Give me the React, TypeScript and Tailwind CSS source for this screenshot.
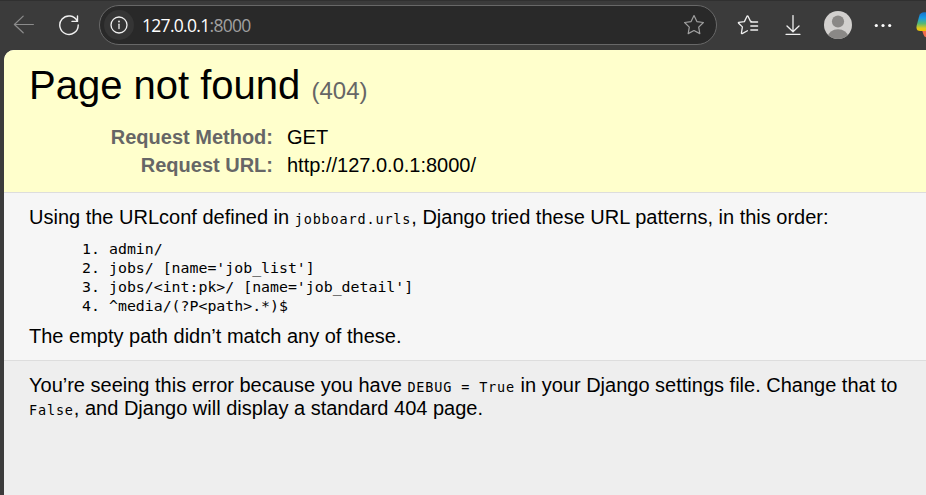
import type { ReactNode } from "react";

const patterns = [
  "admin/",
  "jobs/ [name='job_list']",
  "jobs/<int:pk>/ [name='job_detail']",
  "^media/(?P<path>.*)$",
];

function Code({ children }: { children: ReactNode }) {
  return (
    <code className="whitespace-pre font-['DejaVu_Sans_Mono',monospace] text-[13.5px] leading-none tracking-[0.84px]">
      {children}
    </code>
  );
}

function Toolbar() {
  return (
    <header className="flex h-[50px] shrink-0 items-center border-t border-[#303030] bg-[#3b3b3b] pb-px text-[#f0f0f0]">
      <svg className="ml-[13px] size-[22px] shrink-0 text-[#8b8b8b]" viewBox="0 0 22 22" fill="none" stroke="currentColor" strokeWidth="1.2" strokeLinecap="round" strokeLinejoin="round">
        <path d="M20.4 10.5H1.4M10.2 2.1 1.4 10.5l8.8 8.3" />
      </svg>
      <svg className="ml-[23px] size-[22px] shrink-0" viewBox="0 0 22 22" fill="none" stroke="currentColor" strokeWidth="1.4" strokeLinecap="round" strokeLinejoin="round">
        <path d="M19.2 7A9.2 9.2 0 1 0 20.2 11M19.5 1.9V7.4H14" />
      </svg>
      <div className="ml-[19px] flex h-10 w-[618px] shrink-0 items-center rounded-full border border-[#686868] bg-[#292929]">
        <div className="ml-[4px] flex size-[30px] items-center justify-center rounded-full bg-[#353535]">
          <svg className="size-[18px]" viewBox="0 0 18 18" fill="none" stroke="currentColor" strokeWidth="1.3" strokeLinecap="round">
            <circle cx="9" cy="9" r="8" />
            <path d="M9 8.2V12.6" />
            <circle cx="9" cy="5.5" r=".9" fill="currentColor" stroke="none" />
          </svg>
        </div>
        <span className="ml-[8px] whitespace-nowrap pb-px font-['Open_Sans',sans-serif] text-[17.5px] leading-6 tracking-[-0.7px] text-white">
          127.0.0.1<span className="text-[#a0a0a0]">:8000</span>
        </span>
        <svg className="ml-auto mr-[11px] size-[22px] text-[#a0a0a0]" viewBox="0 0 22 22" fill="none" stroke="currentColor" strokeWidth="1.2" strokeLinejoin="round">
          <path d="m11 1.6 2.9 6 6.5.9-4.7 4.6 1.1 6.5-5.8-3.1-5.8 3.1 1.1-6.5L1.6 8.5l6.5-.9z" />
        </svg>
      </div>
      <svg className="ml-[20px] size-[22px] shrink-0" viewBox="0 0 22 22" fill="none" stroke="currentColor" strokeWidth="1.3" strokeLinecap="round" strokeLinejoin="round">
        <path d="M14.6 7.6 13.4 7.1 11 2.2Q10.5 1.4 10 2.2L7.4 7.6 1.8 8.3Q1 8.6 1.6 9.2l3.8 3.7-1 6.1q0 .9.8.6l5.2-2.8M13.8 8h6.8M13.8 12h6.8M13.8 16h6.8" />
      </svg>
      <svg className="ml-[24px] size-[20px] shrink-0" viewBox="0 0 20 20" fill="none" stroke="currentColor" strokeWidth="1.3" strokeLinecap="round" strokeLinejoin="round">
        <path d="M10 .6v15.8M4 11l6 5.7 6-5.7M3 19.3h14" />
      </svg>
      <svg className="ml-[21px] size-[28px] shrink-0" viewBox="0 0 28 28">
        <defs><clipPath id="avatar"><circle cx="14" cy="14" r="14" /></clipPath></defs>
        <g clipPath="url(#avatar)">
          <rect width="28" height="28" fill="#d2d0ce" />
          <circle cx="14" cy="10.5" r="6.1" fill="#8a8886" />
          <ellipse cx="14" cy="25.5" rx="10" ry="7.2" fill="#8a8886" />
        </g>
      </svg>
      <svg className="ml-[22px] h-[6px] w-[18px] shrink-0" viewBox="0 0 18 6" fill="white">
        <circle cx="2.3" cy="3.5" r="1.6" /><circle cx="9" cy="3.5" r="1.6" /><circle cx="15.7" cy="3.5" r="1.6" />
      </svg>
      <svg className="ml-auto h-[26px] w-[10px] shrink-0" viewBox="0 0 10 26">
        <defs>
          <linearGradient id="copilot" x1="0" y1="0" x2="0" y2="1">
            <stop offset="0" stopColor="#1673c8" />
            <stop offset=".3" stopColor="#159be8" />
            <stop offset=".6" stopColor="#57b873" />
            <stop offset=".85" stopColor="#dfc91c" />
            <stop offset="1" stopColor="#f2c500" />
          </linearGradient>
        </defs>
        <path d="M10 .3H8Q4.4.3 3.3 3.8L.7 13.4Q-.5 19 4.3 19H10z" fill="url(#copilot)" />
        <path d="M6.3 19H10v6.3q-1.8-.5-2.4-2.6z" fill="#f06b4b" />
      </svg>
    </header>
  );
}

export default function App() {
  return (
    <div className="flex h-[495px] w-[926px] flex-col overflow-hidden bg-[#3b3b3b]">
      <Toolbar />
      <main className="ml-1 flex flex-1 flex-col overflow-hidden rounded-tl-[10px] bg-[#eeeeee] font-['Liberation_Sans',Arial,sans-serif] text-[20px] leading-[23px] text-black">
        <section className="h-[143px] shrink-0 border-b border-[#dddddd] bg-[#ffffcc] pl-[25px] pt-[12px]">
          <h1 className="whitespace-nowrap text-[40px] leading-[46px]">
            Page not found <span className="text-[24px] text-[#666666]">(404)</span>
          </h1>
          <table className="mt-[12px] border-collapse">
            <tbody>
              <tr className="h-7">
                <th className="w-[244px] p-0 text-right align-top font-bold text-[#666666]">Request Method:</th>
                <td className="p-0 pl-[14px] align-top">GET</td>
              </tr>
              <tr className="h-7">
                <th className="p-0 text-right align-top font-bold text-[#666666]">Request URL:</th>
                <td className="p-0 pl-[14px] align-top">http://127.0.0.1:8000/</td>
              </tr>
            </tbody>
          </table>
        </section>
        <section className="h-[168px] shrink-0 border-b border-[#dddddd] bg-[#f6f6f6] pl-[25px] pt-[13px]">
          <p className="whitespace-nowrap">
            Using the URLconf defined in <Code>jobboard.urls</Code>, Django tried these URL patterns, in this order:
          </p>
          <ol className="mb-[9px] mt-[11px] font-['DejaVu_Sans_Mono',monospace] text-[14.86px] leading-[19px]">
            {patterns.map((pattern, index) => (
              <li className="flex whitespace-pre" key={pattern}>
                <span className="ml-[53px] w-[27px]">{index + 1}.</span>
                {pattern}
              </li>
            ))}
          </ol>
          <p>The empty path didn’t match any of these.</p>
        </section>
        <section className="pl-[25px] pt-[13px]">
          <p className="whitespace-nowrap">
            You’re seeing this error because you have <Code>DEBUG = True</Code> in your Django settings file. Change that to
            <br />
            <Code>False</Code>, and Django will display a standard 404 page.
          </p>
        </section>
      </main>
    </div>
  );
}
